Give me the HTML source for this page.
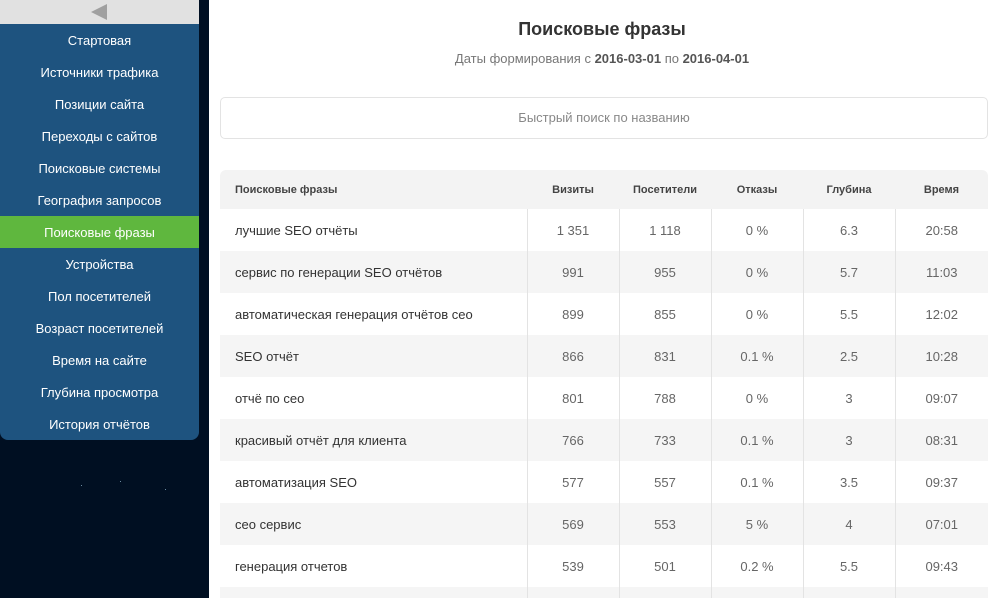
<!DOCTYPE html><html style="overflow:hidden;height:598px"><head><meta charset="utf-8"><style>
*{margin:0;padding:0;box-sizing:border-box}
body{width:995px;height:598px;overflow:hidden;background:#000f22;font-family:"Liberation Sans","DejaVu Sans",sans-serif;position:relative}
.side{position:absolute;left:0;top:0;width:199px;height:440px;background:#1e537f;border-radius:0 0 8px 8px;overflow:hidden}
.side .top{height:24px;background:#e1e1e1;position:relative}
.side .top:after{content:"";position:absolute;left:91px;top:4px;border-right:16px solid #a0a0a0;border-top:8px solid transparent;border-bottom:8px solid transparent}
.side a{display:block;height:32px;line-height:33px;text-align:center;color:#fff;font-size:13px;text-decoration:none}
.side a.act{background:#5fb73e}
.star{position:absolute;width:1px;height:1px;background:#6a8aa0}
.main{position:absolute;left:209px;top:0;width:786px;height:598px;background:#fff;overflow:hidden}
h1{position:absolute;left:0;width:786px;top:19px;text-align:center;font-size:18px;color:#333;font-weight:bold}
.sub{position:absolute;left:0;width:786px;top:51px;text-align:center;font-size:13px;color:#777}
.sub b{color:#555}
.search{position:absolute;left:11px;top:97px;width:768px;height:42px;border:1px solid #e3e3e3;border-radius:5px;text-align:center;line-height:40px;font-size:13px;color:#888}
table{position:absolute;left:11px;top:170px;width:768px;border-collapse:collapse;font-size:13px;color:#333}
th{background:#f3f3f3;height:39px;font-size:11px;font-weight:bold;color:#444;text-align:center}
th:first-child{text-align:left;padding-left:15px;border-top-left-radius:6px}
th:last-child{border-top-right-radius:6px}
td{height:42px;text-align:center;color:#666;border-left:1px solid #e3e3e3}
td:first-child{text-align:left;padding-left:15px;color:#333;border-left:none}
tr:nth-child(odd) td{background:#f5f5f5}
tr.last td{height:11px}
</style></head><body>
<div class="side"><div class="top"></div>
<a>Стартовая</a><a>Источники трафика</a><a>Позиции сайта</a><a>Переходы с сайтов</a><a>Поисковые системы</a><a>География запросов</a><a class="act">Поисковые фразы</a><a>Устройства</a><a>Пол посетителей</a><a>Возраст посетителей</a><a>Время на сайте</a><a>Глубина просмотра</a><a>История отчётов</a></div>
<div class="star" style="left:81px;top:485px"></div><div class="star" style="left:120px;top:481px"></div><div class="star" style="left:165px;top:489px"></div>
<div class="main">
<h1>Поисковые фразы</h1>
<div class="sub">Даты формирования с <b>2016-03-01</b> по <b>2016-04-01</b></div>
<div class="search">Быстрый поиск по названию</div>
<table>
<colgroup><col style="width:307px"><col style="width:92px"><col style="width:92px"><col style="width:92px"><col style="width:92px"><col style="width:93px"></colgroup>
<tr><th>Поисковые фразы</th><th>Визиты</th><th>Посетители</th><th>Отказы</th><th>Глубина</th><th>Время</th></tr>
<tr><td>лучшие SEO отчёты</td><td>1 351</td><td>1 118</td><td>0 %</td><td>6.3</td><td>20:58</td></tr>
<tr><td>сервис по генерации SEO отчётов</td><td>991</td><td>955</td><td>0 %</td><td>5.7</td><td>11:03</td></tr>
<tr><td>автоматическая генерация отчётов сео</td><td>899</td><td>855</td><td>0 %</td><td>5.5</td><td>12:02</td></tr>
<tr><td>SEO отчёт</td><td>866</td><td>831</td><td>0.1 %</td><td>2.5</td><td>10:28</td></tr>
<tr><td>отчё по сео</td><td>801</td><td>788</td><td>0 %</td><td>3</td><td>09:07</td></tr>
<tr><td>красивый отчёт для клиента</td><td>766</td><td>733</td><td>0.1 %</td><td>3</td><td>08:31</td></tr>
<tr><td>автоматизация SEO</td><td>577</td><td>557</td><td>0.1 %</td><td>3.5</td><td>09:37</td></tr>
<tr><td>сео сервис</td><td>569</td><td>553</td><td>5 %</td><td>4</td><td>07:01</td></tr>
<tr><td>генерация отчетов</td><td>539</td><td>501</td><td>0.2 %</td><td>5.5</td><td>09:43</td></tr>
<tr class="last"><td></td><td></td><td></td><td></td><td></td><td></td></tr>
</table>
</div>
</body></html>
